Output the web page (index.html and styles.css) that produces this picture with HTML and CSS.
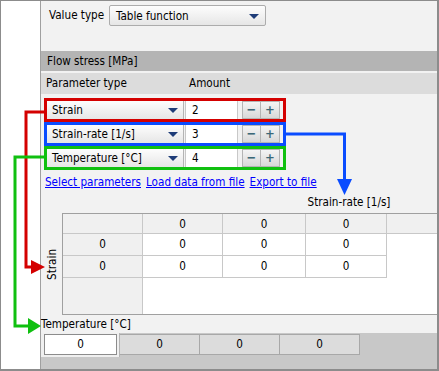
FILE: index.html
```html
<!DOCTYPE html>
<html lang="en">
	<head>
		<title>Flow stress - table function</title>
		<meta charset="utf-8">
		<link rel="stylesheet" href="styles.css">
	</head>

	<body>
		<div class="frame">

			<div class="gutter"></div>

			<div class="panel">

				<div class="value-row">
					<span class="value-label">Value type</span>
					<div class="select wide"><span>Table function</span><i class="caret"></i></div>
				</div>

				<div class="section-head">Flow stress [MPa]</div>

				<div class="col-head">
					<span class="col-type">Parameter type</span>
					<span>Amount</span>
				</div>

				<div class="params">
					<div class="param red">
						<div class="select"><span>Strain</span><i class="caret"></i></div>
						<div class="amount">2</div>
						<div class="spin">&minus;</div><div class="spin">+</div>
					</div>
					<div class="param blue">
						<div class="select"><span>Strain-rate [1/s]</span><i class="caret"></i></div>
						<div class="amount">3</div>
						<div class="spin">&minus;</div><div class="spin">+</div>
					</div>
					<div class="param green">
						<div class="select"><span>Temperature [°C]</span><i class="caret"></i></div>
						<div class="amount">4</div>
						<div class="spin">&minus;</div><div class="spin">+</div>
					</div>
				</div>

				<div class="links">
					<a href="#">Select parameters</a>
					<a href="#">Load data from file</a>
					<a href="#">Export to file</a>
				</div>

				<div class="axis-top"><span>Strain-rate [1/s]</span></div>

				<div class="grid-wrap">
					<div class="axis-left"><span>Strain</span></div>
					<div class="table">
						<div class="cell head"></div>
						<div class="cell head">0</div>
						<div class="cell head">0</div>
						<div class="cell head">0</div>
						<div class="cell head filler"></div>

						<div class="cell head">0</div>
						<div class="cell">0</div>
						<div class="cell">0</div>
						<div class="cell">0</div>
						<div class="cell empty"></div>

						<div class="cell head">0</div>
						<div class="cell">0</div>
						<div class="cell">0</div>
						<div class="cell">0</div>
						<div class="cell empty"></div>

						<div class="cell head rest"></div>
						<div class="cell empty wide-empty"></div>
					</div>
				</div>

				<div class="temp-label">Temperature [°C]</div>

				<div class="strip">
					<div class="tab-active"><div class="tab-cell">0</div></div>
					<div class="tab">0</div>
					<div class="tab">0</div>
					<div class="tab">0</div>
				</div>

			</div>

			<svg class="arrows" width="439" height="371" viewBox="0 0 439 371">
				<path d="M44 112 H26 V267 H33" fill="none" stroke="#d40000" stroke-width="3"/>
				<polygon points="31,260 45,267 31,274" fill="#d40000"/>
				<path d="M44 157 H15 V326 H29" fill="none" stroke="#10c010" stroke-width="3"/>
				<polygon points="28,318 41,326 28,334" fill="#10c010"/>
				<path d="M286 134 H344.5 V181" fill="none" stroke="#0a4cff" stroke-width="3"/>
				<polygon points="337,179 352,179 344.5,195" fill="#0a4cff"/>
			</svg>

		</div>
	</body>
</html>
```

FILE: styles.css
```css
			body {
				margin: 0;
				padding: 0;
				background: #fff;
				color: #000;
				font-family: "DejaVu Sans Condensed", "Liberation Sans", sans-serif;
				font-size: 11.6px;
			}

			.frame {
				position: relative;
				width: 439px;
				height: 371px;
				box-sizing: border-box;
				border: 1px solid #8c8c8c;
				border-width: 1px 2px 2px 1px;
				display: flex;
			}

			.gutter {
				width: 39px;
				background: #fff;
			}

			.panel {
				flex: 1;
				display: flex;
				flex-direction: column;
				background: #f2f2f2;
				border-left: 1px solid #a0a0a0;
				min-width: 0;
			}

			/* value type */
			.value-row {
				height: 50px;
				box-sizing: border-box;
				padding: 4px 0 0 8px;
				display: flex;
				align-items: flex-start;
			}

			.value-label {
				width: 60px;
				line-height: 21px;
			}

			.select {
				position: relative;
				display: flex;
				align-items: center;
				box-sizing: border-box;
				background: linear-gradient(#fdfdfd, #e6e6e6);
			}

			.select.wide {
				width: 157px;
				height: 21px;
				border: 1px solid #acacac;
				border-radius: 2px;
				padding-left: 6px;
			}

			.caret {
				position: absolute;
				right: 5px;
				top: 50%;
				margin-top: -2px;
				width: 0;
				height: 0;
				border-left: 5px solid transparent;
				border-right: 5px solid transparent;
				border-top: 5px solid #1e3c78;
			}

			.select.wide .caret {
				right: 6px;
			}

			/* headers */
			.section-head {
				height: 20px;
				line-height: 20px;
				padding-left: 6px;
				background: #b4b4b4;
				margin-bottom: 2px;
			}

			.col-head {
				height: 21px;
				line-height: 21px;
				padding-left: 5px;
				background: #dcdcdc;
				display: flex;
			}

			.col-type {
				width: 143px;
			}

			/* parameter rows */
			.params {
				margin: 4px 0 0 3px;
				display: flex;
				flex-direction: column;
			}

			.param {
				width: 242px;
				height: 24px;
				box-sizing: border-box;
				border: 3px solid;
				display: flex;
			}

			.param.red { border-color: #d40000; }
			.param.blue { border-color: #0a4cff; }
			.param.green { border-color: #10c010; }

			.param .select {
				width: 137px;
				padding-left: 5px;
				border-right: 1px solid #b4b4b4;
			}

			.amount {
				width: 53px;
				margin-left: 1px;
				padding-left: 6px;
				box-sizing: border-box;
				background: #fff;
				border-left: 1px solid #c8c8c8;
				border-right: 1px solid #c8c8c8;
				line-height: 18px;
			}

			.spin {
				width: 19px;
				box-sizing: border-box;
				border: 1px solid #b4b4b4;
				background: linear-gradient(#f4f4f4, #d8d8d8);
				color: #3a6878;
				font-weight: bold;
				font-size: 13px;
				line-height: 15px;
				text-align: center;
			}

			.amount + .spin {
				margin-left: 4px;
			}

			.spin + .spin {
				border-left: none;
			}

			/* links */
			.links {
				height: 17px;
				line-height: 17px;
				margin-top: 4px;
				padding-left: 4px;
				display: flex;
				gap: 5px;
			}

			.links a {
				color: #0000ff;
			}

			.axis-top {
				height: 22px;
				line-height: 22px;
				padding-left: 264px;
			}

			.axis-top span {
				display: inline-block;
				width: 88px;
				text-align: center;
			}

			/* table */
			.grid-wrap {
				display: flex;
				height: 102px;
			}

			.axis-left {
				width: 21px;
				display: flex;
				align-items: center;
				justify-content: center;
			}

			.axis-left span {
				writing-mode: vertical-rl;
				transform: rotate(180deg);
			}

			.table {
				flex: 1;
				display: grid;
				grid-template-columns: 80px 80px 83px 81px 1fr;
				grid-template-rows: 20px 22px 22px 1fr;
				border: 1px solid #a0a0a0;
				border-right: none;
				background: #fff;
			}

			.cell {
				border-right: 1px solid #c8c8c8;
				border-bottom: 1px solid #c8c8c8;
				text-align: center;
				line-height: 20px;
			}

			.cell.head {
				background: #f0f0f0;
			}

			.cell.filler {
				border-right: none;
			}

			.cell.empty {
				border: none;
			}

			.cell.rest {
				border-bottom: none;
			}

			.cell.wide-empty {
				grid-column: 2 / 6;
			}

			/* temperature */
			.temp-label {
				height: 18px;
				line-height: 19px;
			}

			.strip {
				flex: 1;
				display: flex;
				align-items: flex-start;
				background: #c8c8c8;
			}

			.tab-active {
				width: 79px;
				height: 24px;
				box-sizing: border-box;
				padding: 1px 2px 0 3px;
				background: #f0f0f0;
				border-right: 1px solid #b4b4b4;
			}

			.tab-cell {
				height: 21px;
				box-sizing: border-box;
				border: 1px solid #8c8c8c;
				background: #fff;
				text-align: center;
				line-height: 19px;
			}

			.tab {
				width: 80px;
				height: 21px;
				margin-top: 1px;
				box-sizing: border-box;
				border: 1px solid #a8a8a8;
				border-left: none;
				background: #dcdcdc;
				text-align: center;
				line-height: 19px;
			}

			/* connector arrows drawn over the panel */
			.arrows {
				position: absolute;
				left: -1px;
				top: -1px;
				pointer-events: none;
			}
```
